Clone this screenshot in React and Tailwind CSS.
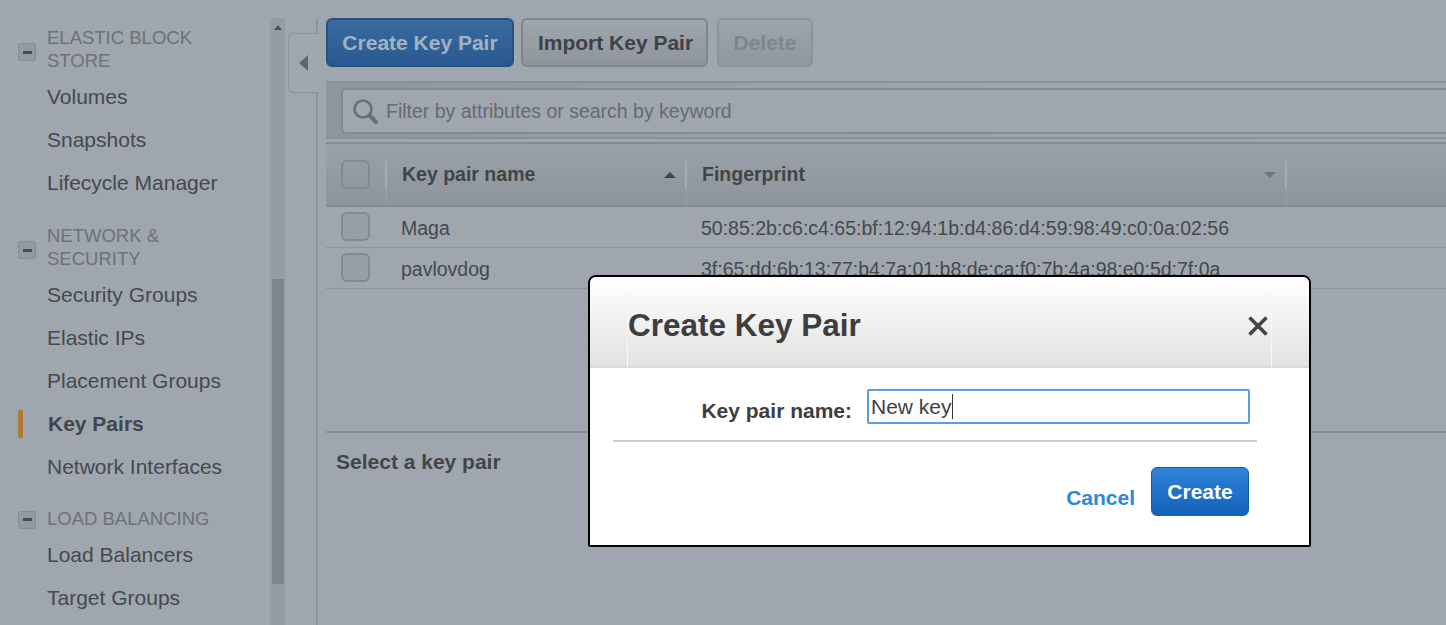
import React from "react";

const groups = [
  { title: ["ELASTIC BLOCK", "STORE"], items: ["Volumes", "Snapshots", "Lifecycle Manager"] },
  { title: ["NETWORK &", "SECURITY"], items: ["Security Groups", "Elastic IPs", "Placement Groups", "Key Pairs", "Network Interfaces"] },
  { title: ["LOAD BALANCING"], items: ["Load Balancers", "Target Groups"] },
];

const rows = [
  { name: "Maga", print: "50:85:2b:c6:c4:65:bf:12:94:1b:d4:86:d4:59:98:49:c0:0a:02:56" },
  { name: "pavlovdog", print: "3f:65:dd:6b:13:77:b4:7a:01:b8:de:ca:f0:7b:4a:98:e0:5d:7f:0a" },
];

function Sidebar() {
  return (
    <div className="w-[270px] shrink-0 pl-[18px] pt-[26px]">
      {groups.map((g, i) => (
        <div key={i} className={i === 0 ? "" : i === 1 ? "mt-[20px]" : "mt-[19px]"}>
          <div className="flex items-center">
            <div className={`w-[18px] h-[18px] rounded-[3px] border border-[#868c93] bg-[#949aa2] flex items-center justify-center ${g.title.length > 1 ? "mt-[6px]" : "mt-[2px]"}`}>
              <div className="w-[9px] h-[3px] bg-[#484c52]" />
            </div>
            <div className="ml-[11px] text-[18.5px] leading-[23px] text-[#6d7278]">
              {g.title.map((t) => (
                <div key={t}>{t}</div>
              ))}
            </div>
          </div>
          <div className="pt-[3px]">
            {g.items.map((item) =>
              item === "Key Pairs" ? (
                <div key={item} className="h-[43px] flex items-center">
                  <div className="w-[5px] h-[28px] rounded-[2px] bg-[#ad7b36]" />
                  <span className="ml-[25px] text-[21px] font-bold text-[#42464c]">{item}</span>
                </div>
              ) : (
                <div key={item} className="h-[43px] flex items-center pl-[29px] text-[21px] text-[#454950]">
                  {item}
                </div>
              )
            )}
          </div>
        </div>
      ))}
    </div>
  );
}

function Scrollbar() {
  return (
    <div className="w-[15px] shrink-0 mt-[18px] bg-[#959ca3] flex flex-col items-center">
      <div className="mt-[7px] h-0 w-0 border-x-[4px] border-b-[5px] border-x-transparent border-b-[#4d5157]" />
      <div className="mt-[249px] w-[12px] h-[305px] bg-[#7f858c]" />
    </div>
  );
}

function CollapseTab() {
  return (
    <div className="w-[41px] shrink-0 flex pl-[3px]">
      <div className="relative z-10 w-[30px] h-[93px] pt-[33px]">
        <div className="h-[60px] rounded-l-[6px] border border-r-0 border-[#8d949b] bg-[#a0a7ae] flex items-center justify-center">
          <div className="h-0 w-0 border-y-[8px] border-r-[9px] border-y-transparent border-r-[#61666c]" />
        </div>
      </div>
      <div className="-ml-[2px] mt-[18px] w-[2px] bg-[#8d949b]" />
    </div>
  );
}

function CheckBox({ className }) {
  return <div className={`w-[29px] h-[29px] rounded-[6px] border-2 border-[#83898f] ${className}`} />;
}

function Toolbar() {
  return (
    <div className="h-[81px] pt-[18px] flex gap-[7px] text-[21px] font-bold">
      <button className="w-[188px] h-[49px] rounded-[6px] border-2 border-[#23527f] bg-gradient-to-b from-[#396b9f] to-[#2a5a90] text-[#a3b2c2]">
        Create Key Pair
      </button>
      <button className="w-[187px] h-[49px] pl-[2px] rounded-[6px] border-2 border-[#7f858c] bg-gradient-to-b from-[#9fa6ad] to-[#8e949b] text-[#3e4146]">
        Import Key Pair
      </button>
      <button className="w-[96px] h-[49px] ml-[2px] rounded-[6px] border-2 border-[#8c9299] bg-gradient-to-b from-[#9ea5ac] to-[#90969d] text-[#80868c]">
        Delete
      </button>
    </div>
  );
}

function FilterBar() {
  return (
    <div className="h-[58px] border-y-2 border-[#8a9097] pl-[15px] pt-[5px] bg-gradient-to-r from-[#8f959c] via-[#9ca3aa] to-[#9fa6ad]">
      <div className="h-[46px] rounded-l-[5px] border-2 border-r-0 border-[#858b92] bg-[#9fa6ad] flex items-center pl-[8px]">
        <svg width="28" height="28" viewBox="0 0 28 28" fill="none" className="shrink-0">
          <circle cx="12" cy="12" r="8.5" stroke="#6a6f75" strokeWidth="2.6" />
          <path d="M18.5 18.5 L25 25" stroke="#6a6f75" strokeWidth="4" strokeLinecap="round" />
        </svg>
        <span className="ml-[7px] pt-[2px] text-[19.5px] text-[#666b71]">Filter by attributes or search by keyword</span>
      </div>
    </div>
  );
}

function SortDivider() {
  return (
    <div className="w-[2px] self-stretch shrink-0 flex items-center border-r border-[#979ea5]">
      <div className="w-[2px] h-[28px] shrink-0 bg-[#a5acb2]" />
    </div>
  );
}

function KeyTable() {
  return (
    <div className="mt-[3px]">
      <div className="h-[65px] border-y-2 border-[#868c93] bg-gradient-to-b from-[#9aa1a8] to-[#8e949b] flex items-center text-[19.5px] font-bold text-[#41454a]">
        <div className="w-[59px] pl-[15px] shrink-0">
          <CheckBox className="" />
        </div>
        <SortDivider />
        <div className="w-[298px] shrink-0 flex items-center pl-[15px] pr-[9px]">
          <span>Key pair name</span>
          <div className="ml-auto h-0 w-0 border-x-[6px] border-b-[6px] border-x-transparent border-b-[#41454a]" />
        </div>
        <SortDivider />
        <div className="w-[598px] shrink-0 flex items-center pl-[15px] pr-[9px]">
          <span>Fingerprint</span>
          <div className="ml-auto h-0 w-0 border-x-[6px] border-t-[6px] border-x-transparent border-t-[#6f747a]" />
        </div>
        <SortDivider />
      </div>
      {rows.map((r) => (
        <div key={r.name} className="h-[41px] border-b border-[#8d949b] flex items-center text-[19.5px] text-[#45494f]">
          <div className="w-[59px] pl-[15px] pb-[2px] shrink-0">
            <CheckBox className="bg-[#979ea5]" />
          </div>
          <div className="w-[300px] pl-[16px] pt-[3px] shrink-0">{r.name}</div>
          <div className="pl-[16px] pt-[3px]">{r.print}</div>
        </div>
      ))}
    </div>
  );
}

function Modal() {
  return (
    <div className="absolute left-[588px] top-[275px] w-[723px] h-[272px] rounded-t-[8px] rounded-b-[2px] border-2 border-black bg-white text-[#3e3e3e]">
      <div className="h-[91px] rounded-t-[6px] bg-gradient-to-b from-white to-[#e2e2e2] border-b-2 border-[#d8d8d8] px-[37px] pt-[16px]">
        <div className="h-[75px] border-x border-[#f6f6f6] flex items-center pr-[2px] pb-[10px]">
          <span className="text-[31.5px] font-bold">Create Key Pair</span>
          <svg width="22" height="22" viewBox="0 0 22 22" className="ml-auto">
            <path d="M2.5 2.5 L19.5 19.5 M19.5 2.5 L2.5 19.5" stroke="#444" strokeWidth="3.6" />
          </svg>
        </div>
      </div>
      <div className="ml-[23px] w-[644px] h-[74px] border-b-2 border-[#cccccc] flex items-start">
        <div className="w-[239px] pt-[31px] text-right text-[21px] leading-[24px] font-bold">Key pair name:</div>
        <div className="ml-[15px] mt-[21px] w-[383px] h-[35px] border-2 border-[#5d9cdf] rounded-[2px] flex items-center pl-[2px] text-[21px]">
          New key
          <div className="w-px h-[25px] bg-[#333]" />
        </div>
      </div>
      <div className="flex justify-end items-center pr-[60px] pt-[25px]">
        <span className="text-[21px] font-bold text-[#2e86de] mt-[13px]">Cancel</span>
        <button className="ml-[16px] w-[98px] h-[49px] rounded-[6px] border border-[#1a5da6] bg-gradient-to-b from-[#2f83db] to-[#1262b8] text-[21px] font-bold text-white">
          Create
        </button>
      </div>
    </div>
  );
}

export default function App() {
  return (
    <div className="relative flex h-[625px] overflow-hidden bg-[#9fa6ad] font-['Liberation_Sans',Arial,sans-serif]">
      <Sidebar />
      <Scrollbar />
      <CollapseTab />
      <div className="flex-1 min-w-0">
        <Toolbar />
        <FilterBar />
        <KeyTable />
        <div className="mt-[142px] border-t-2 border-[#8a9097] pl-[10px] pt-[13px] text-[21px] font-bold text-[#41454a]">
          Select a key pair
        </div>
      </div>
      <Modal />
    </div>
  );
}
